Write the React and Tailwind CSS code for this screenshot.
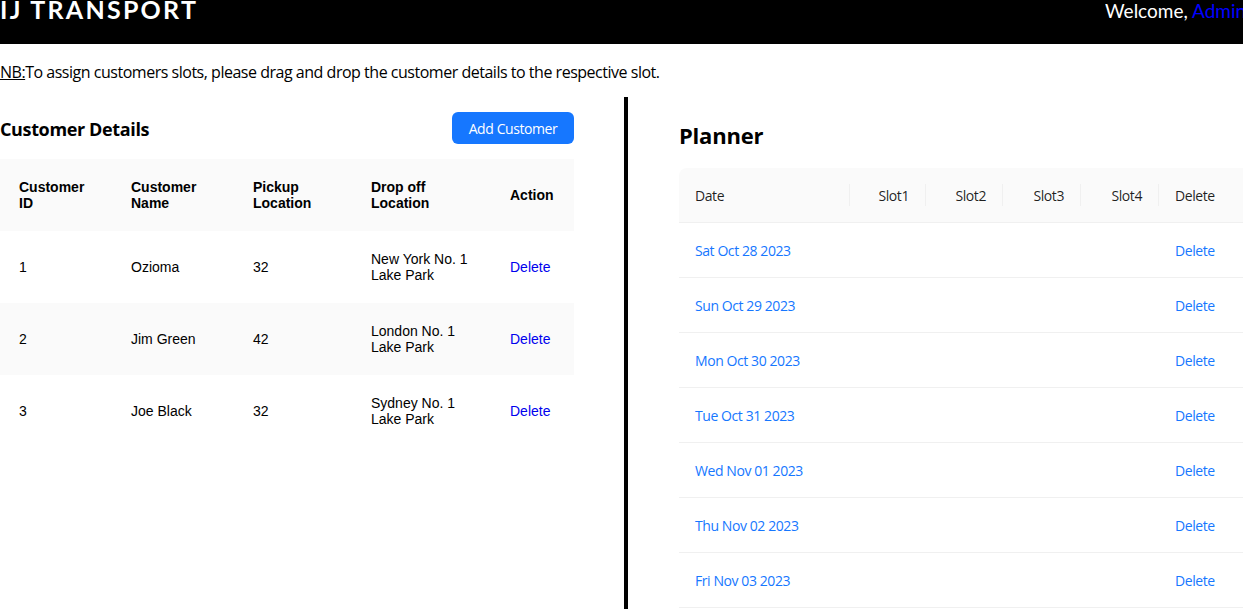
import React from 'react';

const customers = [
  { id: '1', name: 'Ozioma', pickup: '32', drop: ['New York No. 1', 'Lake Park'] },
  { id: '2', name: 'Jim Green', pickup: '42', drop: ['London No. 1', 'Lake Park'] },
  { id: '3', name: 'Joe Black', pickup: '32', drop: ['Sydney No. 1', 'Lake Park'] },
];

const dates = [
  'Sat Oct 28 2023',
  'Sun Oct 29 2023',
  'Mon Oct 30 2023',
  'Tue Oct 31 2023',
  'Wed Nov 01 2023',
  'Thu Nov 02 2023',
  'Fri Nov 03 2023',
];

const segoe = { fontFamily: '"Open Sans", "Noto Sans", sans-serif' };

function Header() {
  return (
    <header className="flex h-[44px] bg-black text-white overflow-hidden">
      <h1 className="text-[25px] leading-none font-bold tracking-[0.09em] -mt-[3px] font-['Lato',sans-serif]">
        IJ TRANSPORT
      </h1>
      <div className="ml-auto w-[138px] overflow-hidden whitespace-nowrap text-[19px] leading-none pt-[1px] font-['Lato',sans-serif]">
        Welcome, <span className="text-[#0000ff]">Admin</span>
      </div>
    </header>
  );
}

function CustomerTable() {
  return (
    <div className="mt-[15px] font-['Liberation_Sans',Arial,sans-serif] text-[14px] leading-[16px] text-black">
      <div className="grid grid-cols-[112px_122px_118px_139px_83px] h-[72px] items-center bg-[#fafafa] font-bold">
        <div className="pl-[19px]">Customer<br />ID</div>
        <div className="pl-[19px]">Customer<br />Name</div>
        <div className="pl-[19px]">Pickup<br />Location</div>
        <div className="pl-[19px]">Drop off<br />Location</div>
        <div className="pl-[19px]">Action</div>
      </div>
      {customers.map((c, i) => (
        <div
          key={c.id}
          className={`grid grid-cols-[112px_122px_118px_139px_83px] h-[72px] items-center ${i === 1 ? 'bg-[#fafafa]' : 'bg-white'}`}
        >
          <div className="pl-[19px]">{c.id}</div>
          <div className="pl-[19px]">{c.name}</div>
          <div className="pl-[19px]">{c.pickup}</div>
          <div className="pl-[19px]">{c.drop[0]}<br />{c.drop[1]}</div>
          <div className="pl-[19px] text-[#0000ee]">Delete</div>
        </div>
      ))}
    </div>
  );
}

function Planner() {
  const cols = 'grid grid-cols-[171px_76px_77px_78px_78px_120px]';
  return (
    <div className="mt-[17px] w-[600px] text-[14px] tracking-[-0.03em]" style={segoe}>
      <div className={`${cols} h-[55px] items-center bg-[#fafafa] rounded-tl-[8px] border-b border-[#f0f0f0] text-[rgba(0,0,0,0.88)] font-medium`}>
        <div className="px-[16px] border-r border-[#f0f0f0] h-[22px] flex items-center">Date</div>
        {['Slot1', 'Slot2', 'Slot3', 'Slot4'].map((s) => (
          <div key={s} className="px-[16px] border-r border-[#f0f0f0] h-[22px] flex items-center justify-end">{s}</div>
        ))}
        <div className="px-[16px]">Delete</div>
      </div>
      {dates.map((d) => (
        <div key={d} className={`${cols} h-[55px] items-center border-b border-[#f0f0f0] text-[#1677ff]`}>
          <div className="px-[16px]">{d}</div>
          <div />
          <div />
          <div />
          <div />
          <div className="px-[16px]">Delete</div>
        </div>
      ))}
    </div>
  );
}

export default function App() {
  return (
    <div className="w-[1243px] h-[609px] overflow-hidden bg-white">
      <Header />
      <p className="pt-[16px] text-[16px] leading-[24px] tracking-[-0.03em] text-black" style={segoe}>
        <span className="underline">NB:</span>To assign customers slots, please drag and drop the customer details to the respective slot.
      </p>
      <main className="mt-[13px] flex">
        <section className="w-[574px] shrink-0 pt-[15px]">
          <div className="flex items-center justify-between h-[32px]">
            <h2 className="text-[18px] font-bold tracking-[-0.02em] text-black pt-[2px]" style={segoe}>Customer Details</h2>
            <button
              className="h-[32px] w-[122px] rounded-[6px] bg-[#1677ff] text-white text-[14px] tracking-[-0.03em]"
              style={segoe}
            >
              Add Customer
            </button>
          </div>
          <CustomerTable />
        </section>
        <div className="ml-[50px] w-[4px] shrink-0 bg-black min-h-[520px]" />
        <section className="ml-[51px] pt-[22px] shrink-0">
          <h2 className="text-[22px] leading-[32px] font-bold tracking-[-0.01em] text-black" style={segoe}>Planner</h2>
          <Planner />
        </section>
      </main>
    </div>
  );
}
